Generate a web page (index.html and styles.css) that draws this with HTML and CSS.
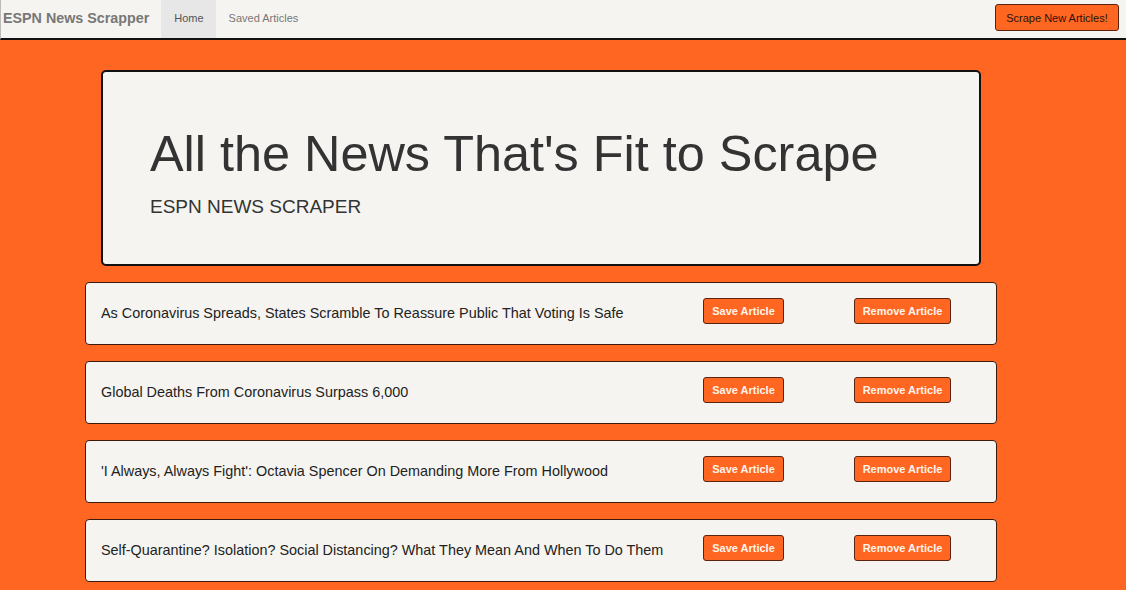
FILE: index.html
```html
<!DOCTYPE html>
<html>
<head>
<meta charset="utf-8">
<title>ESPN News Scrapper</title>
<link rel="stylesheet" href="styles.css">
</head>
<body>
<nav class="navbar">
  <a class="brand" href="#">ESPN News Scrapper</a>
  <ul class="nav">
    <li class="active"><a href="#">Home</a></li>
    <li><a href="#">Saved Articles</a></li>
  </ul>
  <button class="scrape-btn">Scrape New Articles!</button>
</nav>
<main class="page">
  <header class="jumbotron">
    <h1>All the News That's Fit to Scrape</h1>
    <p>ESPN NEWS SCRAPER</p>
  </header>
  <section class="articles">
    <div class="card">
      <span class="title">As Coronavirus Spreads, States Scramble To Reassure Public That Voting Is Safe</span>
      <button class="btn save">Save Article</button>
      <button class="btn remove">Remove Article</button>
    </div>
    <div class="card">
      <span class="title">Global Deaths From Coronavirus Surpass 6,000</span>
      <button class="btn save">Save Article</button>
      <button class="btn remove">Remove Article</button>
    </div>
    <div class="card">
      <span class="title">'I Always, Always Fight': Octavia Spencer On Demanding More From Hollywood</span>
      <button class="btn save">Save Article</button>
      <button class="btn remove">Remove Article</button>
    </div>
    <div class="card">
      <span class="title">Self-Quarantine? Isolation? Social Distancing? What They Mean And When To Do Them</span>
      <button class="btn save">Save Article</button>
      <button class="btn remove">Remove Article</button>
    </div>
  </section>
</main>
</body>
</html>
```

FILE: styles.css
```css
* { box-sizing: border-box; }
html, body {
  margin: 0;
  padding: 0;
  height: 100%;
}
body {
  background: #fe6622;
  font-family: "Liberation Sans", Arial, sans-serif;
  color: #333;
  overflow: hidden;
}
.navbar {
  display: flex;
  align-items: center;
  height: 40px;
  background: #f5f4f0;
  border-bottom: 2px solid #111;
  border-left: 1px solid #bbb;
}
.brand {
  font-size: 14.3px;
  font-weight: bold;
  color: #777;
  text-decoration: none;
  padding: 0 12px 2px 2px;
  line-height: 38px;
}
.nav {
  display: flex;
  list-style: none;
  margin: 0;
  padding: 0;
  height: 38px;
}
.nav li a {
  display: block;
  height: 38px;
  line-height: 36px;
  padding: 0 12px 0 13px;
  font-size: 11px;
  color: #777;
  text-decoration: none;
}
.nav li.active a {
  background: #e7e7e7;
  color: #555;
}
.scrape-btn {
  margin-left: auto;
  margin-right: 7px;
  margin-bottom: 3px;
  width: 124px;
  height: 27px;
  background: #fe6622;
  border: 1px solid #5a2410;
  border-radius: 3px;
  font-family: "Liberation Sans", Arial, sans-serif;
  font-size: 11px;
  color: #2a1408;
  padding: 0;
}
.page {
  padding-top: 30px;
}
.jumbotron {
  margin-left: 101px;
  width: 880px;
  height: 196px;
  background: #f5f4f0;
  border: 2px solid #111;
  border-radius: 5px;
  padding: 46px 47px 0;
}
.jumbotron h1 {
  margin: 0;
  font-weight: normal;
  font-size: 50.4px;
  line-height: 72px;
  color: #333;
}
.jumbotron p {
  margin: 6px 0 0;
  font-size: 19px;
  color: #333;
}
.articles {
  margin-left: 85px;
  width: 912px;
  padding-top: 16px;
  display: flex;
  flex-direction: column;
  gap: 16px;
}
.card {
  display: flex;
  align-items: center;
  height: 63px;
  background: #f5f4f0;
  border: 1px solid #3a1a0a;
  border-radius: 4px;
  padding: 0 0 1px 15px;
}
.title {
  width: 602px;
  font-size: 14.4px;
  color: #222;
}
.btn {
  height: 26px;
  margin-bottom: 4px;
  background: #fe6622;
  border: 1px solid #5a2410;
  border-radius: 3px;
  font-family: "Liberation Sans", Arial, sans-serif;
  font-size: 11px;
  font-weight: bold;
  color: #fff4ea;
  padding: 0;
}
.save {
  width: 81px;
}
.remove {
  width: 97px;
  margin-left: 70px;
}
```
